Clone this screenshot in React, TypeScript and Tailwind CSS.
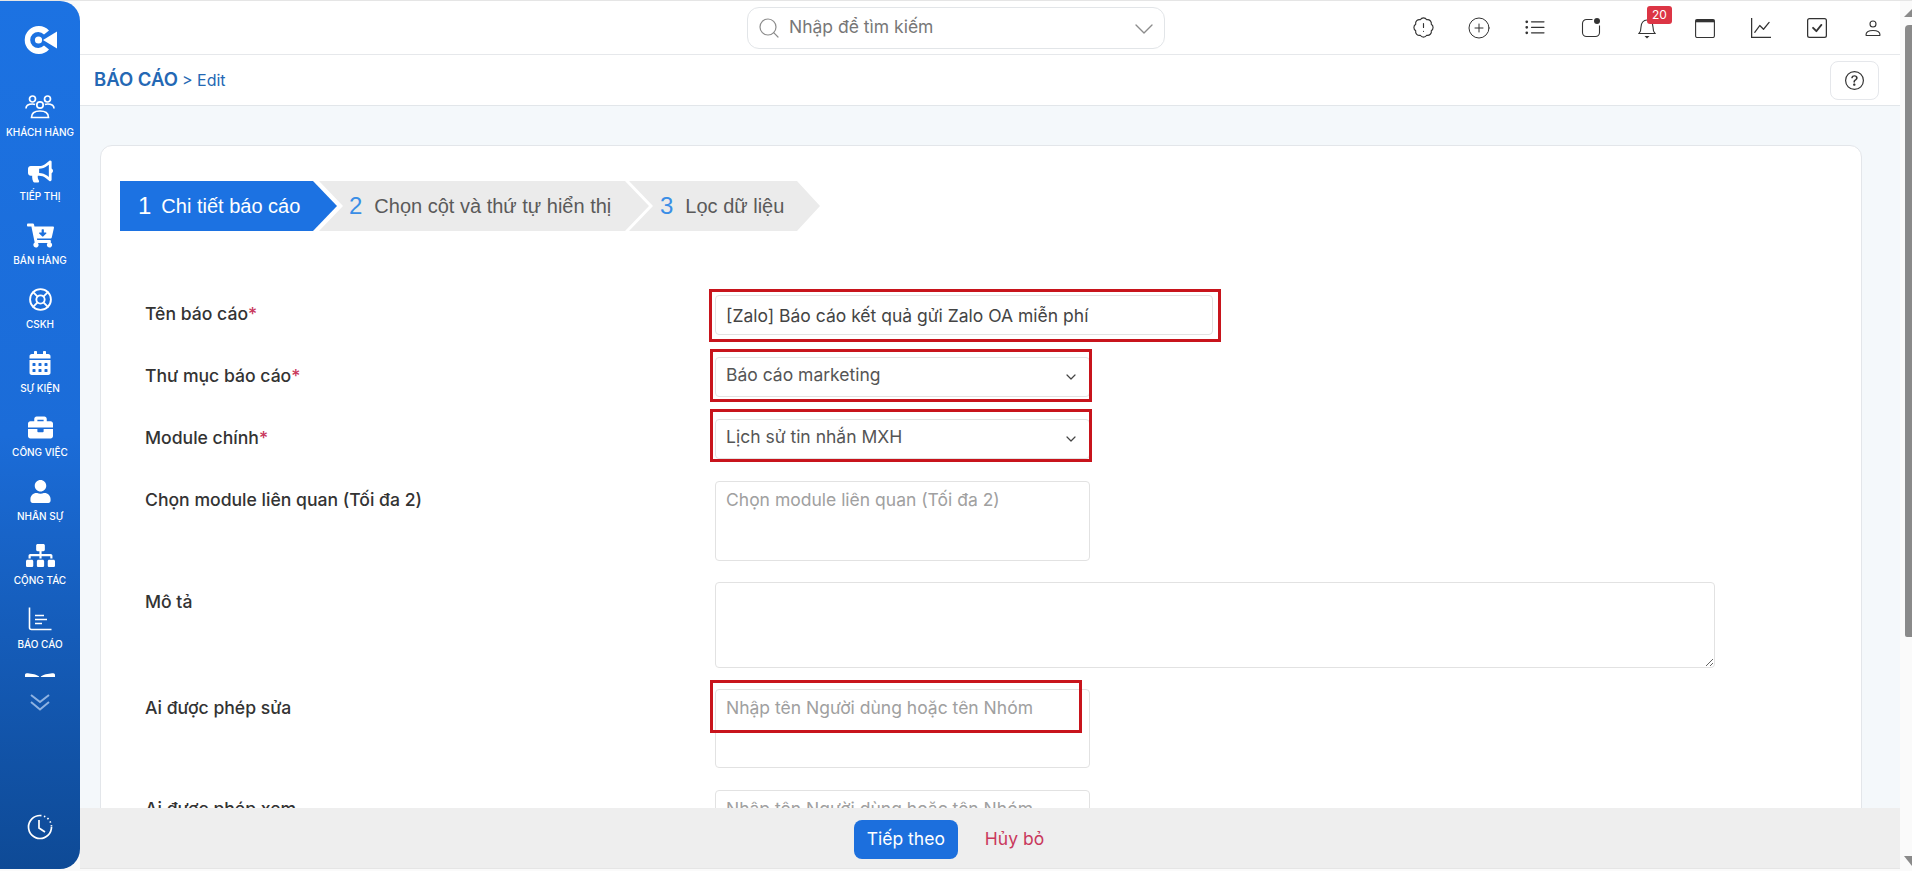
import { BadgeAlert, ChevronDown, CirclePlus, LifeBuoy, Search } from "lucide-react";
import { BsCheckSquare, BsGraphUp, BsListUl, BsQuestionCircle } from "react-icons/bs";
import {
  FaBookOpen,
  FaBriefcase,
  FaBullhorn,
  FaCalendarAlt,
  FaCartArrowDown,
  FaSitemap,
  FaUser,
} from "react-icons/fa";
import type { ReactNode } from "react";

function Logo() {
  return (
    <svg width="36" height="32" viewBox="0 0 36 32" fill="none">
      <path d="M27 6.5A14 14 0 1 0 27 25.5L22 21.5A8 8 0 1 1 22 10.5Z" fill="white" />
      <circle cx="16.5" cy="16" r="3.6" fill="white" />
      <path d="M21 16L35 7.5V24.5Z" fill="white" />
    </svg>
  );
}

function UsersIcon() {
  return (
    <svg width="30" height="24" viewBox="0 0 30 24" fill="none" stroke="white" strokeWidth="1.7">
      <circle cx="7.5" cy="4" r="3" />
      <circle cx="22.5" cy="4" r="3" />
      <circle cx="15" cy="10" r="3.2" />
      <path d="M1 13.5C1 10 4 9 7.5 9c1.2 0 2 .1 2.6.4" />
      <path d="M29 13.5C29 10 26 9 22.5 9c-1.2 0-2 .1-2.6.4" />
      <path d="M6.5 22.5c0-4.5 3.5-6.5 8.5-6.5s8.5 2 8.5 6.5Z" />
    </svg>
  );
}

function ReportIcon() {
  return (
    <svg width="24" height="24" viewBox="0 0 24 24" fill="none" stroke="white" strokeWidth="1.6">
      <path d="M1.5 0.5V20.5a2 2 0 0 0 2 2H23.5" />
      <path d="M7 8.5H16M7 12.5H19M7 16.5H14" />
    </svg>
  );
}

function ClockIcon() {
  return (
    <svg width="26" height="26" viewBox="0 0 26 26" fill="none" stroke="white" strokeWidth="1.7">
      <path d="M13 1.5A11.5 11.5 0 1 0 24.5 13" />
      <path d="M13 1.5A11.5 11.5 0 0 1 24.5 13" strokeDasharray="1.5 2.5" />
      <path d="M12 6V14L18 18" />
    </svg>
  );
}

function DoubleChevron() {
  return (
    <svg width="20" height="17" viewBox="0 0 20 17" fill="none" stroke="#8eb2e2" strokeWidth="2">
      <path d="M1 1L10 8L19 1" />
      <path d="M1 8L10 15.500L19 8" />
    </svg>
  );
}

function DotSquareIcon() {
  return (
    <svg width="20" height="20" viewBox="0 0 20 20" fill="none" stroke="#333" strokeWidth="1.1">
      <path d="M11.5 1.5H5.5a4 4 0 0 0-4 4v9a4 4 0 0 0 4 4h9a4 4 0 0 0 4-4V7.5" />
      <circle cx="16" cy="3" r="3" fill="#333" stroke="none" />
    </svg>
  );
}

function BellIcon() {
  return (
    <svg width="18" height="22" viewBox="0 0 18 22" fill="none" stroke="#333" strokeWidth="1.1">
      <path d="M1 16.5c1.5-1.5 2-3 2-6.5 0-4 2.5-7 6-7s6 3 6 7c0 3.500.5 5 2 6.500Z" />
      <path d="M6.500 19h5L9 21.500Z" fill="#333" stroke="none" />
    </svg>
  );
}

function CalendarIcon() {
  return (
    <svg width="20" height="20" viewBox="0 0 20 20" fill="none" stroke="#333" strokeWidth="1.1">
      <rect x="0.6" y="1.500" width="18.800" height="18" rx="1.500" />
      <path d="M0.6 3H19.400" strokeWidth="2.600" />
    </svg>
  );
}

function PersonIcon() {
  return (
    <svg width="16" height="16" viewBox="0 0 16 16" fill="none" stroke="#333" strokeWidth="1.1">
      <circle cx="8" cy="4" r="3" />
      <path d="M1 15c0-3 3-4.500 7-4.500s7 1.500 7 4.500c0 .4-.3.6-.7.6H1.700c-.4 0-.7-.2-.7-.6Z" />
    </svg>
  );
}

const navItems: { label: string; icon: ReactNode }[] = [
  { label: "KHÁCH HÀNG", icon: <UsersIcon /> },
  { label: "TIẾP THỊ", icon: <FaBullhorn size={25} color="white" /> },
  { label: "BÁN HÀNG", icon: <FaCartArrowDown size={27} color="white" /> },
  { label: "CSKH", icon: <LifeBuoy size={25} color="white" strokeWidth={1.8} /> },
  { label: "SỰ KIỆN", icon: <FaCalendarAlt size={24} color="white" /> },
  { label: "CÔNG VIỆC", icon: <FaBriefcase size={25} color="white" /> },
  { label: "NHÂN SỰ", icon: <FaUser size={23} color="white" /> },
  { label: "CỘNG TÁC", icon: <FaSitemap size={29} color="white" /> },
  { label: "BÁO CÁO", icon: <ReportIcon /> },
];

const topIcons: { key: string; icon: ReactNode; badge?: string; extra?: string }[] = [
  { key: "alert", icon: <BadgeAlert size={23} color="#333" strokeWidth={1.2} /> },
  { key: "add", icon: <CirclePlus size={24} color="#333" strokeWidth={1} /> },
  { key: "list", icon: <BsListUl size={22} color="#333" /> },
  { key: "status", icon: <DotSquareIcon /> },
  { key: "bell", icon: <BellIcon />, badge: "20" },
  { key: "calendar", icon: <CalendarIcon />, extra: "ml-[2px]" },
  { key: "chart", icon: <BsGraphUp size={20} color="#333" /> },
  { key: "check", icon: <BsCheckSquare size={20} color="#333" /> },
  { key: "user", icon: <PersonIcon /> },
];

function Sidebar() {
  return (
    <aside className="flex h-[868px] w-[80px] shrink-0 flex-col items-center rounded-r-[20px] bg-gradient-to-b from-[#1c72e2] via-[#1b6cd8] to-[#0e4a96] text-white">
      <div className="mt-[21px] mb-[36px] flex h-[36px] items-center">
        <Logo />
      </div>
      <div className="h-[583px] w-full shrink-0 overflow-hidden">
        {navItems.map((item) => (
          <div key={item.label} className="flex h-[64px] w-full flex-col items-center">
            <div className="flex h-[26px] items-center">{item.icon}</div>
            <span className="mt-[5px] text-[10px] leading-[14px] font-medium whitespace-nowrap">{item.label}</span>
          </div>
        ))}
        <div className="flex justify-center">
          <FaBookOpen size={30} color="white" />
        </div>
      </div>
      <div className="mt-[17px]">
        <DoubleChevron />
      </div>
      <div className="mt-auto mb-[29px]">
        <ClockIcon />
      </div>
    </aside>
  );
}

function Topbar() {
  return (
    <header className="relative flex h-[54px] items-center border-b border-[#e6e8eb] bg-white">
      <div className="ml-[667px] flex h-[42px] w-[418px] items-center rounded-[12px] border border-[#e2e5e8] pr-[4px] pl-[9px]">
        <Search size={24} strokeWidth={1.2} className="text-[#8c8c8c]" />
        <span className="ml-[8px] text-[17.500px] text-[#777777]">Nhập để tìm kiếm</span>
        <ChevronDown size={32} strokeWidth={1} className="mt-[2px] ml-auto text-[#8c8c8c]" />
      </div>
      <div className="mr-[-1px] ml-auto flex items-center">
        {topIcons.map((item) => (
          <div key={item.key} className={`relative flex h-[54px] w-[56px] items-center justify-center ${item.extra ?? ""}`}>
            {item.icon}
            {item.badge && (
              <span className="absolute top-[5px] left-[28px] flex h-[18px] w-[25px] items-center justify-center rounded-[3px] bg-[#dc3545] text-[12px] leading-none text-white">
                {item.badge}
              </span>
            )}
          </div>
        ))}
      </div>
    </header>
  );
}

function Breadcrumb() {
  return (
    <div className="flex h-[51px] items-center border-b border-[#e2e6ea] bg-white pr-[21px] pl-[14px]">
      <span className="text-[18.500px] font-semibold text-[#2468b4]">BÁO CÁO</span>
      <span className="ml-[4px] text-[16px] text-[#2468b4]">&gt; Edit</span>
      <button className="ml-auto flex h-[39px] w-[49px] items-center justify-center rounded-[8px] border border-[#e5e7eb]">
        <BsQuestionCircle size={19} color="#333" />
      </button>
    </div>
  );
}

function Stepper() {
  return (
    <div className="flex h-[50px] font-['Liberation_Sans',Arial,sans-serif]">
      <div className="flex w-[217px] items-center bg-[#1c72e2] pl-[18px] text-white [clip-path:polygon(0_0,193px_0,100%_50%,193px_100%,0_100%)]">
        <span className="text-[24px]">1</span>
        <span className="ml-[10px] text-[20px]">Chi tiết báo cáo</span>
      </div>
      <div className="-ml-[18px] flex w-[330px] items-center bg-[#ebebeb] pl-[30px] [clip-path:polygon(0_0,306px_0,100%_50%,306px_100%,0_100%,24px_50%)]">
        <span className="text-[24px] text-[#3a8ee6]">2</span>
        <span className="ml-[12px] text-[20px] text-[#5a5a5a]">Chọn cột và thứ tự hiển thị</span>
      </div>
      <div className="-ml-[20px] flex w-[191px] items-center bg-[#ebebeb] pl-[31px] [clip-path:polygon(0_0,168px_0,100%_50%,168px_100%,0_100%,24px_50%)]">
        <span className="text-[24px] text-[#3a8ee6]">3</span>
        <span className="ml-[12px] text-[20px] text-[#5a5a5a]">Lọc dữ liệu</span>
      </div>
    </div>
  );
}

function Row({ label, required, children }: { label: string; required?: boolean; children: ReactNode }) {
  return (
    <div className="mb-[22px] flex">
      <div className="w-[595px] shrink-0 pt-[7px] pl-[25px] text-[17.600px] leading-[24px] font-medium text-[#333333]">
        {label}
        {required && <span className="text-[#c9385c]">*</span>}
      </div>
      {children}
    </div>
  );
}

function RedBox({ className }: { className: string }) {
  return <div className={`pointer-events-none absolute border-[3px] border-[#c8141c] ${className}`} />;
}

function SelectBox({ value, boxClass }: { value: string; boxClass: string }) {
  return (
    <div className="relative flex h-[40px] w-[375px] items-center rounded-[4px] border border-[#e2e2e2] pr-[10px] pb-[3px] pl-[10px] text-[17.500px] text-[#555555]">
      {value}
      <ChevronDown size={16} strokeWidth={1.8} className="mt-[3px] ml-auto text-[#444444]" />
      <RedBox className={boxClass} />
    </div>
  );
}

function UserField({ boxed }: { boxed?: boolean }) {
  return (
    <div className="relative h-[79px] w-[375px] rounded-[4px] border border-[#e2e2e2] px-[10px] pt-[5px] text-[17.500px] text-[#a0a0a0]">
      Nhập tên Người dùng hoặc tên Nhóm
      {boxed && <RedBox className="top-[-10px] left-[-6px] h-[53px] w-[372px]" />}
    </div>
  );
}

function ReportForm() {
  return (
    <div className="mt-[64px]">
      <Row label="Tên báo cáo" required>
        <div className="relative h-[40px] w-[498px]">
          <input
            readOnly
            value="[Zalo] Báo cáo kết quả gửi Zalo OA miễn phí"
            className="h-full w-full rounded-[4px] border border-[#e2e2e2] px-[10px] text-[17.500px] text-[#444444] outline-none"
          />
          <RedBox className="top-[-6px] left-[-6px] h-[53px] w-[512px]" />
        </div>
      </Row>
      <Row label="Thư mục báo cáo" required>
        <SelectBox value="Báo cáo marketing" boxClass="top-[-9px] left-[-6px] h-[53px] w-[382px]" />
      </Row>
      <Row label="Module chính" required>
        <SelectBox value="Lịch sử tin nhắn MXH" boxClass="top-[-11px] left-[-6px] h-[53px] w-[382px]" />
      </Row>
      <Row label="Chọn module liên quan (Tối đa 2)">
        <div className="h-[80px] w-[375px] rounded-[4px] border border-[#e2e2e2] px-[10px] pt-[5px] text-[17.500px] text-[#a0a0a0]">
          Chọn module liên quan (Tối đa 2)
        </div>
      </Row>
      <Row label="Mô tả">
        <textarea readOnly className="-mt-[1px] -mb-[1px] h-[86px] w-[1000px] rounded-[4px] border border-[#e2e2e2] outline-none" />
      </Row>
      <Row label="Ai được phép sửa">
        <UserField boxed />
      </Row>
      <Row label="Ai được phép xem">
        <UserField />
      </Row>
    </div>
  );
}

function Scrollbar() {
  return (
    <div className="flex w-[12px] shrink-0 flex-col items-end bg-[#fafafa]">
      <svg width="8" height="8" viewBox="0 0 8 8" className="mt-[8px]">
        <path d="M8 0V8H0Z" fill="#8a8a8a" />
      </svg>
      <div className="mt-[8px] h-[612px] w-[7px] rounded-tl-[4px] rounded-bl-[2px] bg-[#8a8a8a]" />
      <svg width="8" height="10" viewBox="0 0 8 10" className="mt-[219px]">
        <path d="M0 0H8V10Z" fill="#8a8a8a" />
      </svg>
    </div>
  );
}

export default function App() {
  return (
    <div className="flex h-[871px] w-[1912px] overflow-hidden border-t border-[#e5e5e5] bg-[#fafafa] font-['Inter',sans-serif]">
      <Sidebar />
      <main className="flex h-[868px] min-w-0 flex-1 flex-col border-b border-[#e5e5e5]">
        <Topbar />
        <Breadcrumb />
        <div className="min-h-0 flex-1 overflow-hidden bg-[#f4f8fb] pt-[39px] pr-[38px] pl-[20px]">
          <div className="h-[800px] rounded-[12px] border border-[#e3e6ea] bg-white pt-[35px] pl-[19px]">
            <Stepper />
            <ReportForm />
          </div>
        </div>
        <footer className="flex h-[60px] shrink-0 items-center justify-center bg-[#eeeeee] pt-[2px] pr-[82px]">
          <button className="h-[39px] w-[104px] rounded-[8px] bg-[#1c6fdd] text-[17.500px] text-white">Tiếp theo</button>
          <span className="ml-[27px] text-[17.500px] text-[#c9385c]">Hủy bỏ</span>
        </footer>
      </main>
      <Scrollbar />
    </div>
  );
}
